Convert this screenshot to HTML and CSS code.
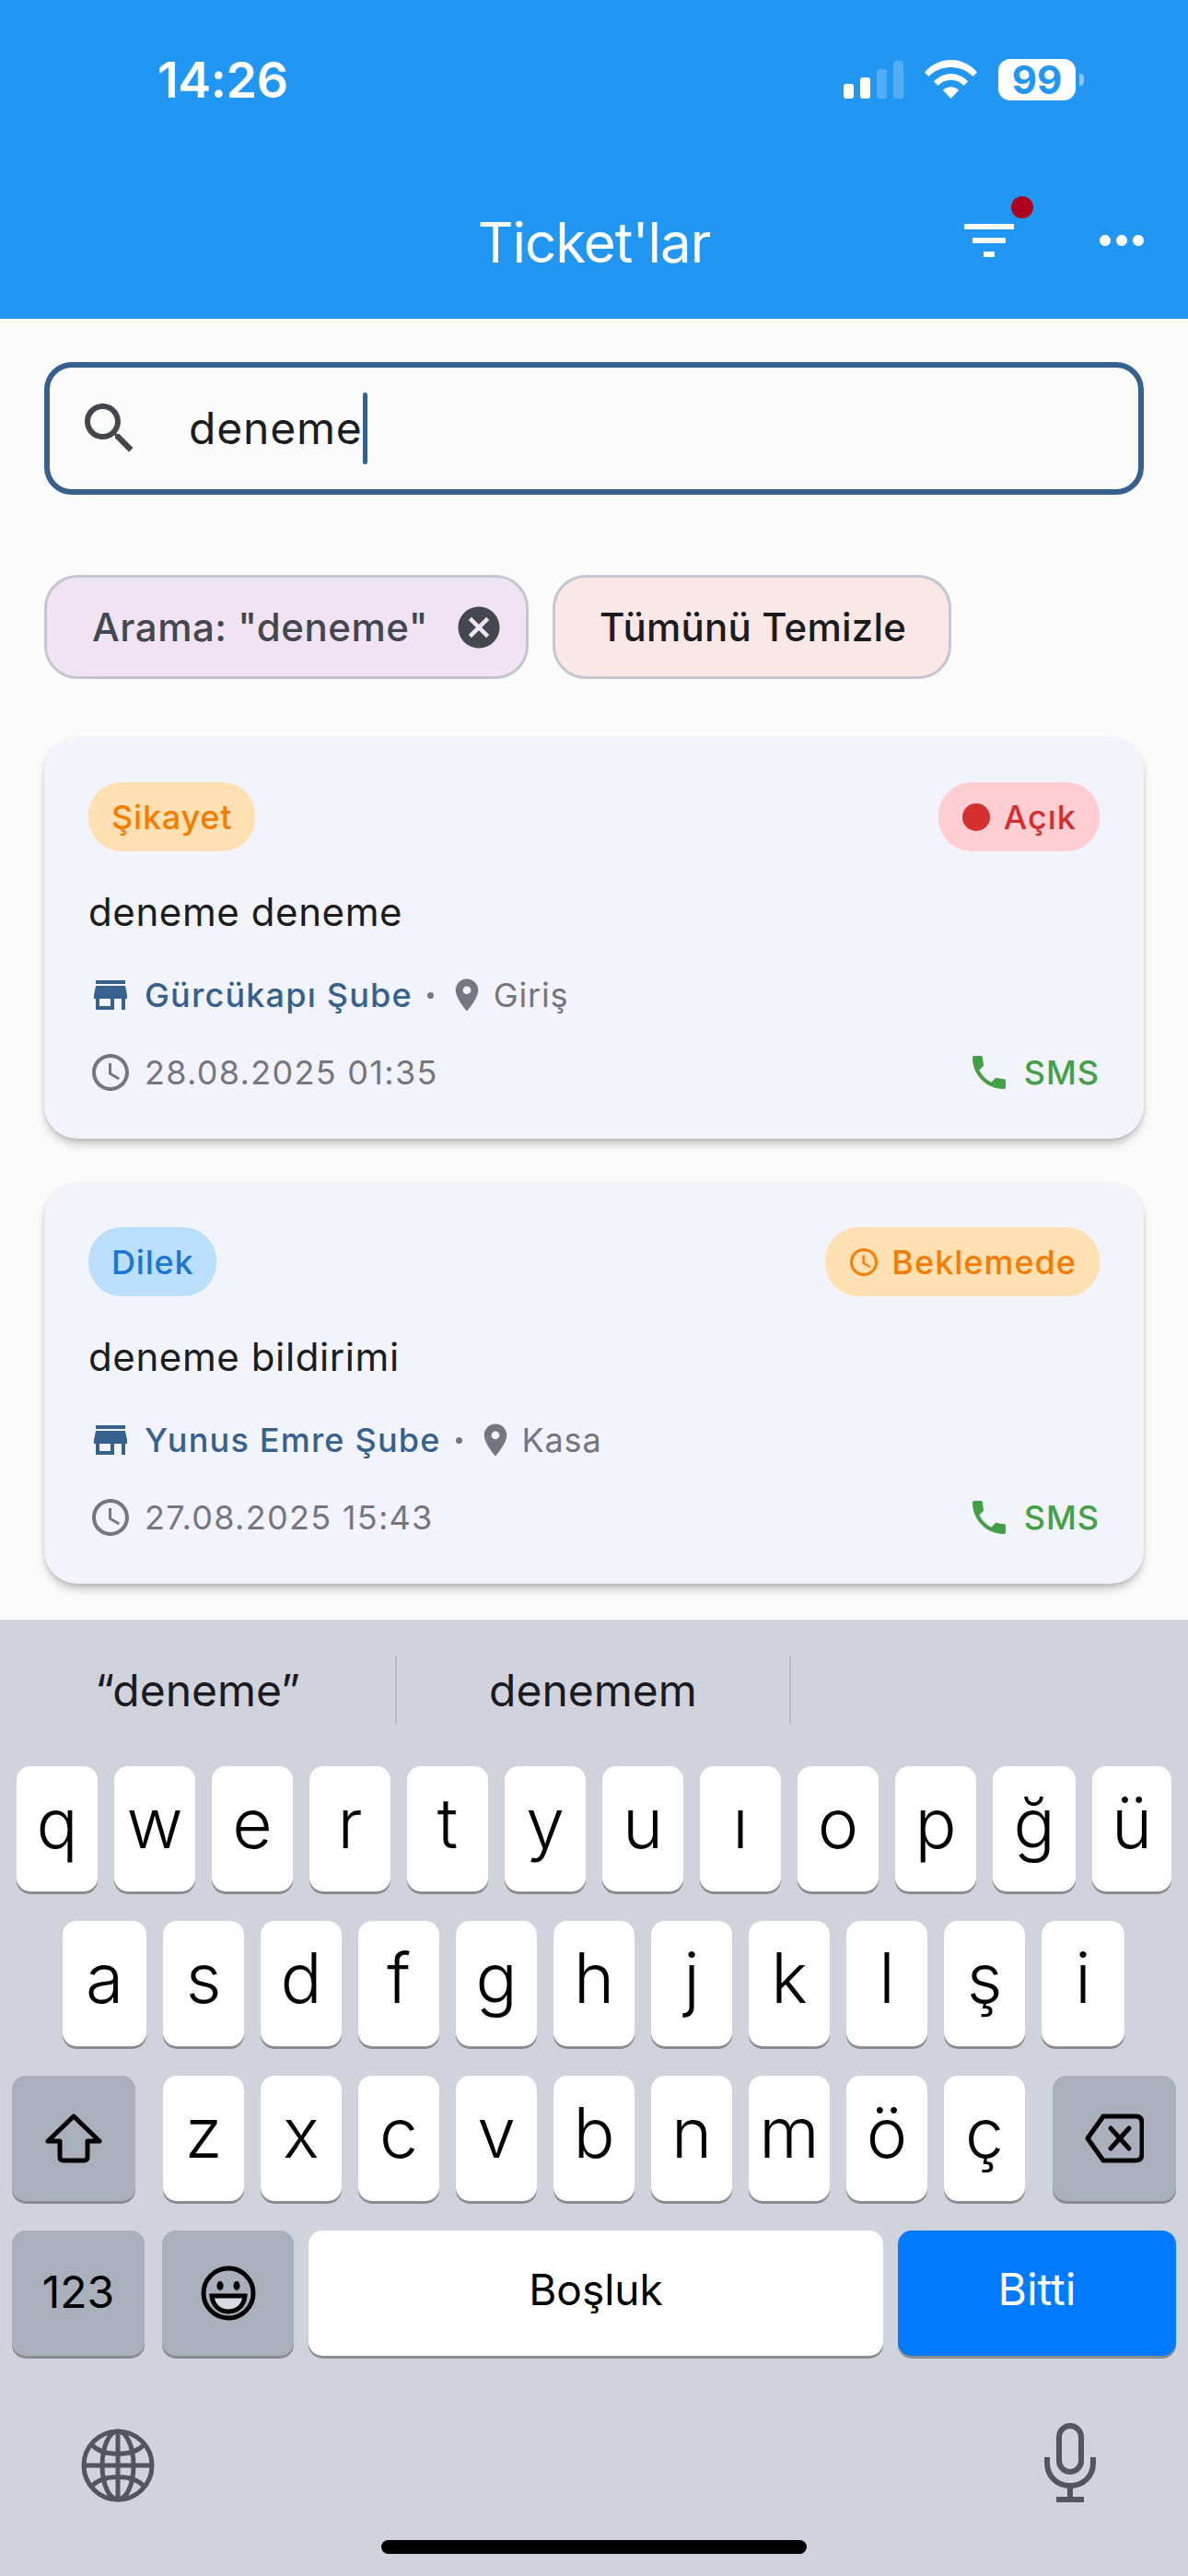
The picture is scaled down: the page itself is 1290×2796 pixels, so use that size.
FILE: index.html
```html
<!DOCTYPE html>
<html lang="tr">
<head>
<meta charset="utf-8">
<title>Ticket'lar</title>
<link rel="stylesheet" href="styles.css">
</head>
<body>
<svg class="defs" aria-hidden="true">
  <symbol id="i-store" viewBox="0 0 24 24"><path d="M20 4H4v2h16V4zm1 10v-2l-1-5H4l-1 5v2h1v6h10v-6h4v6h2v-6h1zm-9 4H6v-4h6v4z"/></symbol>
  <symbol id="i-place" viewBox="0 0 24 24"><path d="M12 2C8.130 2 5 5.130 5 9c0 5.250 7 13 7 13s7-7.750 7-13c0-3.870-3.130-7-7-7zm0 9.500c-1.380 0-2.500-1.120-2.500-2.500s1.120-2.500 2.500-2.500 2.500 1.120 2.500 2.500-1.120 2.500-2.500 2.500z"/></symbol>
  <symbol id="i-time" viewBox="0 0 24 24"><path d="M11.990 2C6.470 2 2 6.480 2 12s4.470 10 9.990 10C17.520 22 22 17.520 22 12S17.520 2 11.990 2zM12 20c-4.420 0-8-3.580-8-8s3.580-8 8-8 8 3.580 8 8-3.580 8-8 8zm.5-13H11v6l5.250 3.150.75-1.230-4.500-2.670z"/></symbol>
  <symbol id="i-phone" viewBox="0 0 24 24"><path d="M6.620 10.790c1.440 2.830 3.760 5.140 6.590 6.590l2.200-2.200c.27-.27.67-.36 1.020-.24 1.120.37 2.330.57 3.570.57.55 0 1 .45 1 1V20c0 .55-.45 1-1 1-9.390 0-17-7.610-17-17 0-.55.45-1 1-1h3.500c.55 0 1 .45 1 1 0 1.250.2 2.450.57 3.570.11.35.03.74-.25 1.020l-2.200 2.200z"/></symbol>
</svg>

<header class="top">
  <div class="status">
    <span class="time">14:26</span>
    <div class="status-icons">
      <div class="signal">
        <i class="bar bar-1"></i><i class="bar bar-2"></i><i class="bar bar-3 dim"></i><i class="bar bar-4 dim"></i>
      </div>
      <svg class="wifi" viewBox="0 0 57 42"><path d="M0 13.500C15 -4.500 42 -4.500 57 13.500L52.500 18C40 4.500 17 4.500 4.500 18Z"/><path d="M10 23.500C20 12 37 12 47 23.500L42.500 28C34 19.500 23 19.500 14.500 28Z"/><path d="M20 33C25 28 32 28 37 33L28.500 42Z"/></svg>
      <div class="battery"><span class="battery-body">99</span><i class="battery-nub"></i></div>
    </div>
  </div>
  <div class="appbar">
    <h1 class="title">Ticket'lar</h1>
    <div class="actions">
      <div class="action">
        <svg class="icon-72" viewBox="0 0 24 24"><path d="M10 18h4v-2h-4v2zM3 6v2h18V6H3zm3 7h12v-2H6v2z"/></svg>
        <i class="notif"></i>
      </div>
      <svg class="icon-72" viewBox="0 0 24 24"><path d="M6 10c-1.100 0-2 .9-2 2s.9 2 2 2 2-.9 2-2-.9-2-2-2zm12 0c-1.100 0-2 .9-2 2s.9 2 2 2 2-.9 2-2-.9-2-2-2zm-6 0c-1.100 0-2 .9-2 2s.9 2 2 2 2-.9 2-2-.9-2-2-2z"/></svg>
    </div>
  </div>
</header>

<main class="content">
  <div class="search">
    <svg class="search-icon" viewBox="0 0 24 24"><path d="M15.500 14h-.79l-.28-.27C15.410 12.590 16 11.110 16 9.500 16 5.910 13.090 3 9.500 3S3 5.910 3 9.500 5.910 16 9.500 16c1.610 0 3.090-.59 4.230-1.570l.27.28v.79l5 4.990L20.490 19l-4.990-5zm-6 0C7.010 14 5 11.990 5 9.500S7.010 5 9.500 5 14 7.010 14 9.500 11.990 14 9.500 14z"/></svg>
    <span class="search-text">deneme</span><i class="caret"></i>
  </div>

  <div class="chips">
    <div class="chip chip-search">
      <span>Arama: "deneme"</span>
      <svg class="chip-x" viewBox="0 0 24 24"><path d="M12 2C6.470 2 2 6.470 2 12s4.470 10 10 10 10-4.470 10-10S17.530 2 12 2zm5 13.590L15.590 17 12 13.410 8.410 17 7 15.590 10.590 12 7 8.410 8.410 7 12 10.590 15.590 7 17 8.410 13.410 12 17 15.590z"/></svg>
    </div>
    <div class="chip chip-clear"><span>Tümünü Temizle</span></div>
  </div>

  <article class="card">
    <div class="card-top">
      <span class="badge badge-orange">Şikayet</span>
      <span class="badge badge-red badge-status"><i class="status-dot"></i>Açık</span>
    </div>
    <p class="card-title">deneme deneme</p>
    <div class="loc">
      <svg class="icon-48 blue"><use href="#i-store"/></svg>
      <span class="branch">Gürcükapı Şube</span>
      <i class="sep"></i>
      <svg class="icon-pin"><use href="#i-place"/></svg>
      <span class="dept">Giriş</span>
    </div>
    <div class="meta">
      <div class="meta-date">
        <svg class="icon-48 grey"><use href="#i-time"/></svg>
        <span class="date">28.08.2025 01:35</span>
      </div>
      <div class="meta-sms">
        <svg class="icon-48 green"><use href="#i-phone"/></svg>
        <span class="sms">SMS</span>
      </div>
    </div>
  </article>

  <article class="card">
    <div class="card-top">
      <span class="badge badge-blue">Dilek</span>
      <span class="badge badge-orange badge-status"><svg class="status-clock"><use href="#i-time"/></svg>Beklemede</span>
    </div>
    <p class="card-title">deneme bildirimi</p>
    <div class="loc">
      <svg class="icon-48 blue"><use href="#i-store"/></svg>
      <span class="branch">Yunus Emre Şube</span>
      <i class="sep"></i>
      <svg class="icon-pin"><use href="#i-place"/></svg>
      <span class="dept">Kasa</span>
    </div>
    <div class="meta">
      <div class="meta-date">
        <svg class="icon-48 grey"><use href="#i-time"/></svg>
        <span class="date">27.08.2025 15:43</span>
      </div>
      <div class="meta-sms">
        <svg class="icon-48 green"><use href="#i-phone"/></svg>
        <span class="sms">SMS</span>
      </div>
    </div>
  </article>
</main>

<section class="keyboard">
  <div class="suggest">
    <span class="sug sug-1">“deneme”</span>
    <span class="sug sug-2">denemem</span>
    <span class="sug sug-3"></span>
  </div>
  <div class="row row-1">
    <b class="key">q</b><b class="key">w</b><b class="key">e</b><b class="key">r</b><b class="key">t</b><b class="key">y</b><b class="key">u</b><b class="key">ı</b><b class="key">o</b><b class="key">p</b><b class="key key-g">ğ</b><b class="key key-u">ü</b>
  </div>
  <div class="row row-2">
    <b class="key key-a">a</b><b class="key">s</b><b class="key">d</b><b class="key">f</b><b class="key">g</b><b class="key">h</b><b class="key">j</b><b class="key">k</b><b class="key">l</b><b class="key">ş</b><b class="key key-i">i</b>
  </div>
  <div class="row row-3">
    <b class="key key-fn key-shift">
      <svg class="shift-icon" viewBox="0 0 62 54"><path d="M31 3 L59 30 H46 V47 Q46 51 42 51 H20 Q16 51 16 47 V30 H3 Z"/></svg>
    </b>
    <b class="key">z</b><b class="key">x</b><b class="key">c</b><b class="key">v</b><b class="key">b</b><b class="key">n</b><b class="key">m</b><b class="key">ö</b><b class="key">ç</b>
    <b class="key key-fn key-del">
      <svg class="del-icon" viewBox="0 0 64 54"><path d="M20 3 H55 Q62 3 62 10 V44 Q62 51 55 51 H20 L3 27 Z"/><path d="M28 16 L48 38 M48 16 L28 38"/></svg>
    </b>
  </div>
  <div class="row row-4">
    <b class="key key-fn key-num">123</b>
    <b class="key key-fn key-emoji">
      <svg class="emoji-icon" viewBox="0 0 60 60"><circle cx="30" cy="30" r="27"/><ellipse class="solid" cx="21" cy="22" rx="3.500" ry="5"/><ellipse class="solid" cx="39" cy="22" rx="3.500" ry="5"/><path class="mouth" d="M12 33 H48 C47 44 39 50 30 50 C21 50 13 44 12 33 Z"/></svg>
    </b>
    <b class="key key-space">Boşluk</b>
    <b class="key key-done">Bitti</b>
  </div>
  <div class="kb-bottom">
    <svg class="globe" viewBox="0 0 80 80"><circle cx="40" cy="40" r="37"/><ellipse cx="40" cy="40" rx="17" ry="37"/><path d="M40 3 V77 M3 40 H77 M11 17 C24 31 56 31 69 17 M11 63 C24 49 56 49 69 63"/></svg>
    <svg class="mic" viewBox="0 0 56 86"><rect x="16" y="3" width="24" height="50" rx="12"/><path d="M3 37 V43 C3 58 14 68 28 68 C42 68 53 58 53 43 V37 M28 68 V83 M13 83 H43"/></svg>
  </div>
  <div class="home-wrap"><i class="home"></i></div>
</section>
</body>
</html>
```

FILE: styles.css
```css
* { box-sizing: border-box; }
html, body { margin: 0; padding: 0; }
body {
  width: 1290px;
  height: 2796px;
  overflow: hidden;
  display: flex;
  flex-direction: column;
  background: #fbfbfb;
  font-family: "Inter", "Liberation Sans", sans-serif;
  color: #1a1c1e;
}
.defs { width: 0; height: 0; position: absolute; }
i { display: block; font-style: normal; }

/* header */
.top { height: 346px; background: #2196f3; color: #fff; flex: none; padding-top: 64px; }
.status {
  height: 64px;
  padding: 0 113px 0 171px;
  display: flex;
  justify-content: space-between;
  align-items: flex-start;
}
.time { font-size: 54px; font-weight: 600; line-height: 46px; letter-spacing: -0.5px; }
.status-icons { display: flex; align-items: flex-start; }
.signal { display: flex; gap: 7px; align-items: flex-end; height: 43px; }
.bar { width: 11px; background: #fff; border-radius: 3px; }
.bar-1 { height: 16px; }
.bar-2 { height: 23px; }
.bar-3 { height: 32px; }
.bar-4 { height: 41px; }
.dim { background: rgba(255,255,255,.22); }
.wifi { width: 57px; height: 42px; fill: #fff; margin-left: 23px; margin-top: 1px; }
.battery { display: flex; align-items: center; margin-left: 23px; height: 45px; }
.battery-body {
  width: 84px; height: 45px; background: #fff; border-radius: 13px;
  color: #2196f3; font-size: 42px; font-weight: 700; line-height: 45px; text-align: center;
}
.battery-nub { width: 5px; height: 13px; margin-left: 4px; background: rgba(255,255,255,.45); border-radius: 0 4px 4px 0; }

.appbar { height: 72px; margin-top: 97px; padding-right: 36px; display: flex; justify-content: flex-end; position: relative; align-items: center; }
.title { position: absolute; left: 0; right: 0; top: 2px; margin: 0; text-align: center; font-size: 60px; font-weight: 400; line-height: 72px; letter-spacing: -1px; }
.actions { display: flex; gap: 72px; }
.action { position: relative; height: 72px; }
.icon-72 { width: 72px; height: 72px; fill: #fff; display: block; }
.notif { position: absolute; right: -12px; top: -12px; width: 24px; height: 24px; border-radius: 50%; background: #b00020; }

/* content */
.content { flex: 1; padding: 47px 48px 0; display: flex; flex-direction: column; }
.search {
  height: 144px; border: 6px solid #36618e; border-radius: 30px;
  display: flex; align-items: center; padding-left: 29px;
}
.search-icon { width: 72px; height: 72px; fill: #44474e; flex: none; }
.search-text { margin-left: 50px; font-size: 48px; letter-spacing: 0.800px; line-height: 60px; }
.caret { width: 5px; height: 78px; background: #36618e; border-radius: 3px; }

.chips { display: flex; gap: 26px; margin-top: 87px; }
.chip {
  height: 113px; border: 3px solid #c4c6d0; border-radius: 36px;
  display: flex; align-items: center; font-size: 42px; font-weight: 450; letter-spacing: 0.500px;
}
.chip-search { width: 526px; background: #f0e4f2; color: #44474e; padding-left: 49px; }
.chip-x { width: 54px; height: 54px; fill: #44474e; margin-left: 28px; flex: none; }
.chip-clear { width: 433px; background: #fae7e5; padding-left: 48px; color: #1a1c1e; letter-spacing: 0.200px; }

.card {
  height: 436px; background: #f3f4fb; border-radius: 36px; padding: 49px 48px 0;
  margin-top: 63px;
  box-shadow: 0 7px 12px -3px rgba(0,0,0,.28), 0 2px 4px rgba(0,0,0,.08);
}
.card + .card { margin-top: 47px; }
.card-top { display: flex; justify-content: space-between; height: 75px; }
.badge {
  height: 75px; border-radius: 36px; padding: 0 25px;
  display: flex; align-items: center; font-size: 36px; font-weight: 500; letter-spacing: 0.800px; white-space: nowrap;
}
.badge-status { padding: 0 25px 0 27px; letter-spacing: 1px; }
.badge-orange { background: #ffe0b2; color: #f57c00; }
.badge-red { background: #ffcdd2; color: #d32f2f; padding-left: 26px; }
.badge-blue { background: #bbdefb; color: #1976d2; }
.status-dot { width: 30px; height: 30px; border-radius: 50%; background: #d32f2f; margin-right: 15px; }
.status-clock { width: 36px; height: 36px; fill: #f57c00; margin-right: 12px; margin-left: -3px; }
.card-title { margin: 36px 0 0; font-size: 42px; line-height: 60px; letter-spacing: 0.600px; }
.loc { display: flex; align-items: center; height: 48px; margin-top: 36px; font-size: 36px; letter-spacing: 1.200px; }
.icon-48 { width: 48px; height: 48px; flex: none; display: block; }
.blue { fill: #36618e; }
.grey { fill: #74777f; }
.green { fill: #43a047; }
.branch { color: #36618e; font-weight: 450; margin-left: 13px; }
.sep { width: 7px; height: 7px; border-radius: 50%; background: #74777f; margin-left: 16px; }
.icon-pin { width: 42px; height: 42px; fill: #74777f; margin-left: 15px; flex: none; }
.dept { color: #74777f; margin-left: 8px; letter-spacing: 0.800px; }
.meta { display: flex; justify-content: space-between; height: 48px; margin-top: 36px; font-size: 36px; letter-spacing: 1.300px; }
.meta-date, .meta-sms { display: flex; align-items: center; }
.date { color: #74777f; margin-left: 13px; }
.sms { color: #43a047; margin-left: 14px; font-weight: 450; letter-spacing: 1px; }

/* keyboard */
.keyboard { height: 1038px; background: #d0d3db; flex: none; padding-top: 39px; }
.suggest { display: flex; height: 74px; }
.sug { display: flex; align-items: center; justify-content: center; font-size: 48px; color: #1a1b1e; letter-spacing: 0; }
.sug-1 { width: 429px; }
.sug-2 { width: 430px; border-left: 2px solid #b8bbc2; border-right: 2px solid #b8bbc2; }
.sug-3 { flex: 1; }
.row { display: flex; gap: 18px; height: 136px; }
.row-1 { margin-top: 46px; padding-left: 18px; }
.row-2 { margin-top: 32px; padding-left: 68px; }
.row-3 { margin-top: 32px; padding-left: 13px; }
.row-4 { margin-top: 32px; padding-left: 13px; gap: 16px; }
.key {
  width: 88px; height: 136px; background: #fff; border-radius: 15px;
  box-shadow: 0 3px 0 #8b8c90;
  display: flex; align-items: center; justify-content: center;
  padding-bottom: 13px;
  font-size: 75px; font-weight: 300; color: #000; line-height: 1;
  flex: none;
}
.key-g { width: 90px; }
.key-u { width: 86px; }
.key-a { width: 91px; }
.key-i { width: 90px; }
.key-fn { background: #a9afbb; padding-bottom: 0; }
.key-shift { width: 134px; margin-right: 12px; }
.key-del { width: 134px; margin-left: 12px; }
.key-num { width: 144px; font-size: 48px; font-weight: 400; padding-bottom: 2px; }
.key-emoji { width: 143px; margin-left: 3px; }
.key-space { width: 624px; font-size: 46px; font-weight: 400; padding-bottom: 8px; }
.key-done { width: 302px; background: #007aff; color: #fff; font-size: 48px; font-weight: 400; padding-bottom: 8px; }
.shift-icon, .del-icon { fill: none; stroke: #000; stroke-width: 5; stroke-linejoin: round; stroke-linecap: round; }
.shift-icon { width: 62px; height: 54px; }
.del-icon { width: 64px; height: 54px; }
.emoji-icon { width: 60px; height: 60px; fill: none; stroke: #000; stroke-width: 5; }
.emoji-icon .solid { fill: #000; stroke: none; }
.emoji-icon .mouth { fill: #d9dbe0; }
.kb-bottom { display: flex; justify-content: space-between; padding: 73px 100px 0 88px; height: 200px; align-items: flex-start; }
.globe { width: 80px; height: 80px; margin-top: 6px; fill: none; stroke: #50555f; stroke-width: 5; }
.mic { width: 56px; height: 86px; fill: none; stroke: #50555f; stroke-width: 6; }
.home-wrap { display: flex; justify-content: center; }
.home { width: 462px; height: 15px; background: #000; border-radius: 8px; }
```
